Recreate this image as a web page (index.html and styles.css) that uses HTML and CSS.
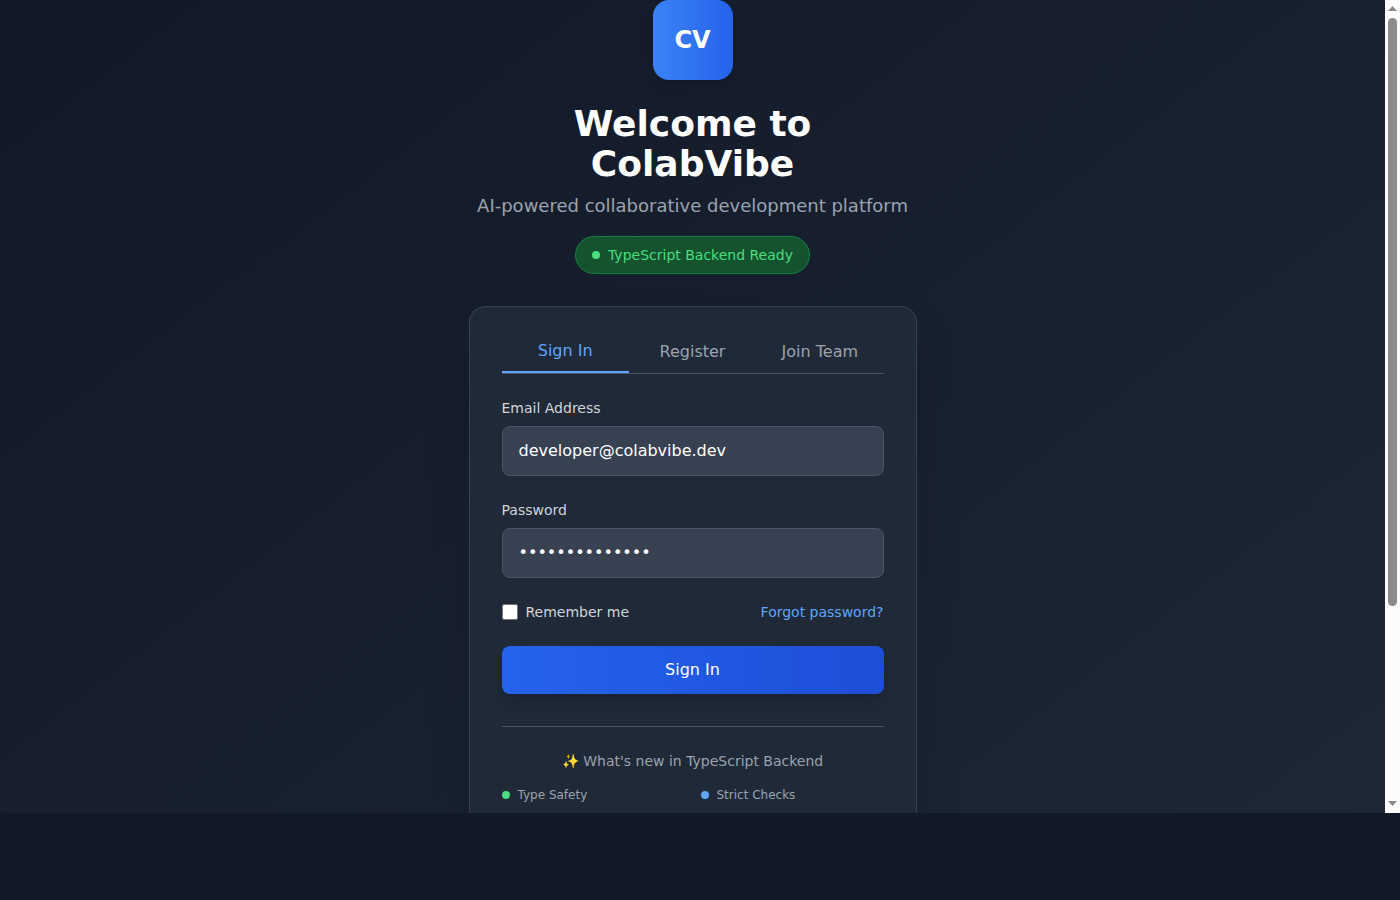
FILE: index.html
```html
<!DOCTYPE html>
<html lang="en">
<head>
<meta charset="utf-8">
<meta name="viewport" content="width=device-width, initial-scale=1">
<title>ColabVibe</title>
<link rel="stylesheet" href="styles.css">
</head>
<body>
<div class="frame">
<main class="screen">
  <div class="page">
  <div class="column">
    <header class="intro">
      <div class="logo">CV</div>
      <h1 class="title">Welcome to ColabVibe</h1>
      <p class="tagline">AI-powered collaborative development platform</p>
      <div class="status"><span class="dot dot-green"></span>TypeScript Backend Ready</div>
    </header>
    <section class="card">
      <nav class="tabs">
        <button type="button" class="tab tab-active">Sign In</button>
        <button type="button" class="tab">Register</button>
        <button type="button" class="tab">Join Team</button>
      </nav>
      <form class="form">
        <div class="field">
          <label class="label" for="email">Email Address</label>
          <input class="input" id="email" type="email" value="developer@colabvibe.dev">
        </div>
        <div class="field">
          <label class="label" for="password">Password</label>
          <input class="input" id="password" type="password" value="colabvibe-2024">
        </div>
        <div class="options">
          <label class="remember" for="remember"><input class="check" id="remember" type="checkbox">Remember me</label>
          <a class="link" href="#">Forgot password?</a>
        </div>
        <button type="button" class="submit">Sign In</button>
      </form>
      <div class="news">
        <p class="news-title">✨ What's new in TypeScript Backend</p>
        <ul class="features">
          <li class="feature"><span class="dot dot-green"></span>Type Safety</li>
          <li class="feature"><span class="dot dot-blue"></span>Strict Checks</li>
        </ul>
      </div>
    </section>
  </div>
  </div>
</main>
<div class="scrollbar" aria-hidden="true">
  <svg class="arrow" viewBox="0 0 15 18"><path d="M7.500 6L12 11H3z"/></svg>
  <div class="track">
    <div class="thumb"></div>
    <div class="rest"></div>
  </div>
  <svg class="arrow" viewBox="0 0 15 18"><path d="M7.500 11L3 6H12z"/></svg>
</div>
</div>
<footer class="base"></footer>
</body>
</html>
```
FILE: styles.css
```css
*, *::before, *::after { box-sizing: border-box; }

body {
  display: flex;
  flex-direction: column;
  height: 100vh;
  margin: 0;
  background: #111827;
  color: #ffffff;
  font-family: "DejaVu Sans", sans-serif;
  font-size: 16px;
  line-height: 24px;
}

h1, p, ul { margin: 0; padding: 0; }
button, input { font: inherit; margin: 0; }
button { border: 0; cursor: pointer; }

.frame {
  display: flex;
  flex: 1;
  min-height: 0;
}

.screen {
  flex: 1;
  min-width: 0;
  overflow-y: auto;
  scrollbar-width: none;
}

.page {
  min-height: 100%;
  background: linear-gradient(to bottom right, #111827, #1f2937);
}

.scrollbar {
  display: flex;
  flex-direction: column;
  flex: none;
  width: 15px;
  background: #fcfcfc;
}
.arrow {
  flex: none;
  width: 15px;
  height: 18px;
  fill: #8b8b8b;
}
.track {
  display: flex;
  flex: 1;
  flex-direction: column;
  padding: 0 3px;
}
.thumb {
  flex: 588;
  border-radius: 5px;
  background: #8b8b8b;
}
.rest { flex: 189; }

.base {
  flex: none;
  height: 87px;
}

.column {
  max-width: 448px;
  margin: 0 auto;
  padding-bottom: 128px;
}

.intro {
  display: flex;
  flex-direction: column;
  align-items: center;
  margin-bottom: 32px;
  text-align: center;
}

.logo {
  display: flex;
  align-items: center;
  justify-content: center;
  width: 80px;
  height: 80px;
  margin-bottom: 24px;
  border-radius: 16px;
  background: linear-gradient(90deg, #3b82f6, #2563eb);
  box-shadow: 0 10px 15px -3px rgba(0, 0, 0, 0.1), 0 4px 6px -4px rgba(0, 0, 0, 0.1);
  font-size: 24px;
  line-height: 32px;
  font-weight: 700;
}

.title {
  margin-bottom: 8px;
  font-size: 36px;
  line-height: 40px;
  font-weight: 700;
}

.tagline {
  margin-bottom: 16px;
  color: #9ca3af;
  font-size: 18px;
  line-height: 28px;
}

.status {
  display: flex;
  align-items: center;
  gap: 8px;
  padding: 8px 16px;
  border: 1px solid #15803d;
  border-radius: 20px;
  background: #14532d;
  color: #4ade80;
  font-size: 14px;
  line-height: 20px;
}

.dot {
  flex: none;
  width: 8px;
  height: 8px;
  border-radius: 50%;
}
.dot-green { background: #4ade80; }
.dot-blue { background: #60a5fa; }

.card {
  padding: 32px;
  padding-bottom: 144px;
  border: 1px solid #374151;
  border-radius: 16px;
  background: #1f2937;
  box-shadow: 0 25px 50px -12px rgba(0, 0, 0, 0.25);
}

.tabs {
  display: flex;
  margin-bottom: 24px;
  border-bottom: 1px solid #4b5563;
}

.tab {
  flex: 1;
  padding: 0 0 8px;
  background: none;
  color: #9ca3af;
}
.tab-active {
  border-bottom: 2px solid #60a5fa;
  color: #60a5fa;
}

.form, .field { display: flex; flex-direction: column; }
.form { gap: 24px; }
.field { gap: 8px; }

.label, .options {
  color: #d1d5db;
  font-size: 14px;
  line-height: 20px;
}

.input {
  width: 100%;
  padding: 12px 16px;
  border: 1px solid #4b5563;
  border-radius: 8px;
  background: #374151;
  color: #ffffff;
}

.options, .remember {
  display: flex;
  align-items: center;
}
.options { justify-content: space-between; }
.remember { gap: 8px; }
.check { width: 16px; height: 16px; }
.link { color: #60a5fa; text-decoration: none; }

.submit {
  padding: 12px 16px;
  border-radius: 8px;
  background: linear-gradient(90deg, #2563eb, #1d4ed8);
  box-shadow: 0 10px 15px -3px rgba(0, 0, 0, 0.1), 0 4px 6px -4px rgba(0, 0, 0, 0.1);
  color: #ffffff;
}

.news {
  margin-top: 32px;
  padding-top: 24px;
  border-top: 1px solid #4b5563;
}

.news-title {
  margin-bottom: 16px;
  color: #9ca3af;
  font-size: 14px;
  line-height: 20px;
  text-align: center;
}

.features {
  display: grid;
  grid-template-columns: 1fr 1fr;
  gap: 16px;
  list-style: none;
}

.feature {
  display: flex;
  align-items: center;
  gap: 8px;
  color: #9ca3af;
  font-size: 12px;
  line-height: 16px;
}
```
